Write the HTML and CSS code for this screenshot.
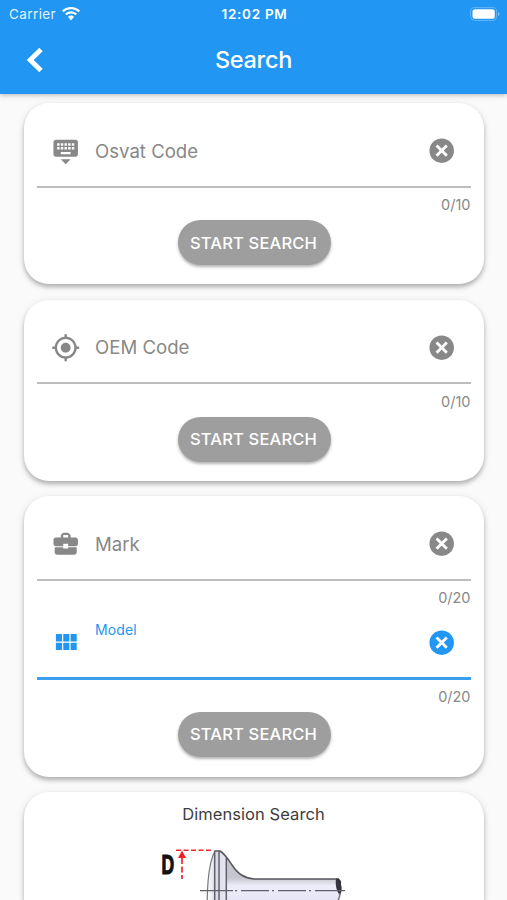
FILE: index.html
```html
<!DOCTYPE html>
<html lang="en">
<head>
<meta charset="utf-8">
<title>Search</title>
<link rel="stylesheet" href="styles.css">
</head>
<body>
<svg class="defs" width="0" height="0">
  <symbol id="cancel" viewBox="0 0 24 24"><circle cx="12" cy="12" r="10"/><path d="m7.800 7.800 8.400 8.400m0-8.400-8.400 8.400" stroke="#fff" stroke-width="2.300"/></symbol>
</svg>
<header class="appbar">
  <div class="status">
    <div class="carrier"><span>Carrier</span>
      <svg class="wifi" viewBox="0 0 18 14"><path d="M9 0C5.500 0 2.400 1.300 0 3.600L1.500 5.200C3.500 3.300 6 2.200 9 2.200s5.500 1.100 7.500 3L18 3.600C15.600 1.300 12.500 0 9 0zM9 4.300c-2.300 0-4.400.9-6 2.400l1.600 1.600C5.800 7.200 7.300 6.500 9 6.500s3.200.7 4.400 1.800L15 6.700C13.400 5.200 11.300 4.300 9 4.300zM9 8.600c-1.200 0-2.200.5-3 1.200l3 3.700 3-3.700C11.200 9.100 10.200 8.600 9 8.600z"/></svg>
    </div>
    <div class="time">12:02 PM</div>
    <svg class="battery" viewBox="0 0 30 14"><rect x=".6" y=".6" width="26" height="12.800" rx="4" fill="none" stroke="#fff" stroke-opacity=".3"/><rect x="2.500" y="2.300" width="22.300" height="9.400" rx="2.500"/><path d="M28 5v4q1.600-.6 1.600-2T28 5z" opacity=".4"/></svg>
  </div>
  <div class="titlebar">
    <svg class="back" viewBox="0 0 18 26"><path d="M15 2.500 4.200 13 15 23.500" fill="none" stroke="#fff" stroke-width="4.800"/></svg>
    <h1>Search</h1>
  </div>
</header>
<main>
  <section class="card">
    <div class="field">
      <div class="row">
        <svg class="icon" viewBox="0 0 24 24"><path d="M20 3H4c-1.100 0-1.990.9-1.990 2L2 15c0 1.100.9 2 2 2h16c1.100 0 2-.9 2-2V5c0-1.100-.9-2-2-2zm-9 3h2v2h-2V6zm0 3h2v2h-2V9zM8 6h2v2H8V6zm0 3h2v2H8V9zm-1 2H5V9h2v2zm0-3H5V6h2v2zm9 7H8v-2h8v2zm0-4h-2V9h2v2zm0-3h-2V6h2v2zm3 3h-2V9h2v2zm0-3h-2V6h2v2zm-7 15 4-4H8l4 4z"/></svg>
        <span class="label">Osvat Code</span>
        <svg class="icon"><use href="#cancel"/></svg>
      </div>
      <div class="counter">0/10</div>
    </div>
    <button>START SEARCH</button>
  </section>
  <section class="card">
    <div class="field">
      <div class="row">
        <svg class="icon" viewBox="0 0 24 24"><path d="M12 8c-2.210 0-4 1.790-4 4s1.790 4 4 4 4-1.790 4-4-1.790-4-4-4zm8.940 3c-.46-4.170-3.770-7.480-7.940-7.940V1h-2v2.060C6.830 3.520 3.520 6.830 3.060 11H1v2h2.060c.46 4.170 3.770 7.480 7.940 7.940V23h2v-2.060c4.170-.46 7.480-3.770 7.940-7.940H23v-2h-2.060zM12 19c-3.870 0-7-3.130-7-7s3.130-7 7-7 7 3.130 7 7-3.130 7-7 7z"/></svg>
        <span class="label">OEM Code</span>
        <svg class="icon"><use href="#cancel"/></svg>
      </div>
      <div class="counter">0/10</div>
    </div>
    <button>START SEARCH</button>
  </section>
  <section class="card">
    <div class="field">
      <div class="row">
        <svg class="icon" viewBox="0 0 24 24"><path d="M10 16v-1H3.010L3 19c0 1.110.89 2 2 2h14c1.110 0 2-.89 2-2v-4h-7v1h-4zm10-9h-4.010V5l-2-2h-4l-2 2v2H4c-1.100 0-2 .9-2 2v3c0 1.110.89 2 2 2h6v-2h4v2h6c1.100 0 2-.9 2-2V9c0-1.100-.9-2-2-2zm-6 0h-4V5h4v2z"/></svg>
        <span class="label">Mark</span>
        <svg class="icon"><use href="#cancel"/></svg>
      </div>
      <div class="counter">0/20</div>
    </div>
    <div class="field active">
      <div class="row">
        <svg class="icon" viewBox="0 0 24 24"><path d="M4 11h5V5H4v6zm0 7h5v-6H4v6zm6 0h5v-6h-5v6zm6 0h5v-6h-5v6zm-6-7h5V5h-5v6zm6-6v6h5V5h-5z"/></svg>
        <span class="label">Model</span>
        <svg class="icon"><use href="#cancel"/></svg>
      </div>
      <div class="counter">0/20</div>
    </div>
    <button>START SEARCH</button>
  </section>
  <section class="card dimension">
    <h2>Dimension Search</h2>
    <svg class="valve" viewBox="150 840 210 60">
      <defs>
        <linearGradient id="stem" gradientUnits="userSpaceOnUse" x1="0" y1="878" x2="0" y2="900"><stop stop-color="#c6c6d0"/><stop offset=".35" stop-color="#ededfa"/><stop offset="1" stop-color="#e6e6f6"/></linearGradient>
        <linearGradient id="head"><stop stop-color="#fff"/><stop offset=".4" stop-color="#dcdce8"/><stop offset="1" stop-color="#e8e8f6"/></linearGradient>
      </defs>
      <path d="M216 851h5c5 3 8 8 12 14 6 9 12 13 22 14h85v42H209z" fill="url(#stem)"/>
      <path d="M216 851h5l7 8v61h-19c-2-25 0-57 7-69z" fill="url(#head)"/>
      <path d="M209 920c-2-25 0-57 7-69" fill="none" stroke="#777780" stroke-width="1.200"/>
      <path d="M215.500 851h5.500c5 3 8 8 12 14 6 9 12 13 22 14h85" fill="none" stroke="#55555c" stroke-width="1.500"/>
      <path d="M215.700 851v70M220 851v70M227.300 858v62" stroke="#62626c" stroke-width="1.500"/>
      <path d="M337 878.500c5 0 5.500 3 5 6 1 3 1 7-1 11-3-4-5-9-4-17z" fill="#34343c"/>
      <path d="M341 893c0 3-1 5-2 8" fill="none" stroke="#777780" stroke-width="1.500"/>
      <path d="M201 890.700h33m2 0h2m4 0h28m3 0h2m4 0h28m3 0h2m4 0h30" stroke="#62626c" stroke-width="1.300"/>
      <path d="M177 850.300h35" stroke="#f02830" stroke-width="1.500" stroke-dasharray="5 2.500"/>
      <path d="M183 858v21" stroke="#f02830" stroke-width="1.700" stroke-dasharray="6 2.500"/>
      <path d="m183 850.500 4 7.500h-8z" fill="#f02028"/>
      <text class="dim" transform="translate(162.400 874) scale(.65 1)">D</text>
    </svg>
  </section>
</main>
</body>
</html>
```
FILE: styles.css
```css
* { box-sizing: border-box; }
body {
  margin: 0;
  height: 900px;
  overflow: hidden;
  display: flex;
  flex-direction: column;
  background: #fafafa;
  font-family: Inter, "Liberation Sans", sans-serif;
}
.defs { position: absolute; }
svg { fill: currentColor; flex: none; }
.appbar {
  position: relative;
  flex: none;
  height: 94px;
  background: #2196f3;
  color: #fff;
  box-shadow: 0 1px 5px rgba(0, 0, 0, .28);
}
.status {
  display: grid;
  grid-template-columns: 1fr auto 1fr;
  align-items: center;
  height: 27px;
  padding: 0 7px 0 9px;
  font-size: 13.500px;
}
.carrier { display: flex; align-items: center; gap: 6px; color: #e2f2ff; letter-spacing: .4px; }
.wifi { width: 18px; height: 14px; color: #fff; }
.time { font-weight: 600; font-size: 13.500px; letter-spacing: .7px; }
.battery { justify-self: end; width: 30px; height: 14px; }
.titlebar {
  display: grid;
  grid-template-columns: 1fr auto 1fr;
  align-items: center;
  height: 66px;
  padding: 0 26px;
}
.back { width: 18px; height: 26px; }
h1 { margin: -2px 0 0; font-size: 23.500px; font-weight: 500; letter-spacing: -.3px; }
main {
  flex: 1;
  min-height: 0;
  display: flex;
  flex-direction: column;
  gap: 15.300px;
  padding: 9px 23px 0 24px;
}
.card {
  flex: none;
  display: flex;
  flex-direction: column;
  align-items: center;
  height: 181.400px;
  padding: 13px 13px 0;
  border-radius: 25px;
  background: #fff;
  box-shadow: 0 3px 4px rgba(0, 0, 0, .24), 0 2px 8px rgba(0, 0, 0, .1);
}
.card:nth-child(3) { height: 280.400px; }
.field { width: 100%; height: 98.500px; color: #888; }
.row {
  display: flex;
  align-items: center;
  height: 71.500px;
  padding: 0 14.300px 0 13.500px;
  border-bottom: 2px solid #bdbdbd;
}
.icon { width: 29.400px; height: 29.400px; }
.label { flex: 1; padding-left: 15.100px; font-size: 18.600px; }
.counter { padding: 7.500px .5px 0 0; text-align: right; font-size: 14.500px; line-height: 20px; }
.active { color: #2196f3; }
.active .row { height: 72.500px; border-bottom: 3px solid #3a9fee; }
.active .label { align-self: flex-start; padding-top: 13.600px; font-size: 14px; line-height: 18px; letter-spacing: .1px; }
.active .counter { padding-top: 7px; color: #888; }
button {
  width: 153px;
  height: 45px;
  margin-top: 5.500px;
  padding: 0 1px 0 0;
  border: 0;
  border-radius: 23px;
  background: #9e9e9e;
  color: #fff;
  font: 500 16.500px Inter, "Liberation Sans", sans-serif;
  letter-spacing: .18px;
  white-space: nowrap;
  box-shadow: 0 2px 3px rgba(0, 0, 0, .3);
}
.dimension { padding-top: 12px; height: 108px; border-radius: 25px 25px 0 0; }
h2 { margin: 0 1px 0 0; color: #3d3d3d; font-size: 16.500px; line-height: 20px; font-weight: 400; letter-spacing: .07px; }
.valve { width: 210px; height: 60px; margin: 16px 0 0; }
.dim { font: 900 27px "Liberation Sans", sans-serif; fill: #111; stroke: #111; stroke-width: 1.200px; }
```
